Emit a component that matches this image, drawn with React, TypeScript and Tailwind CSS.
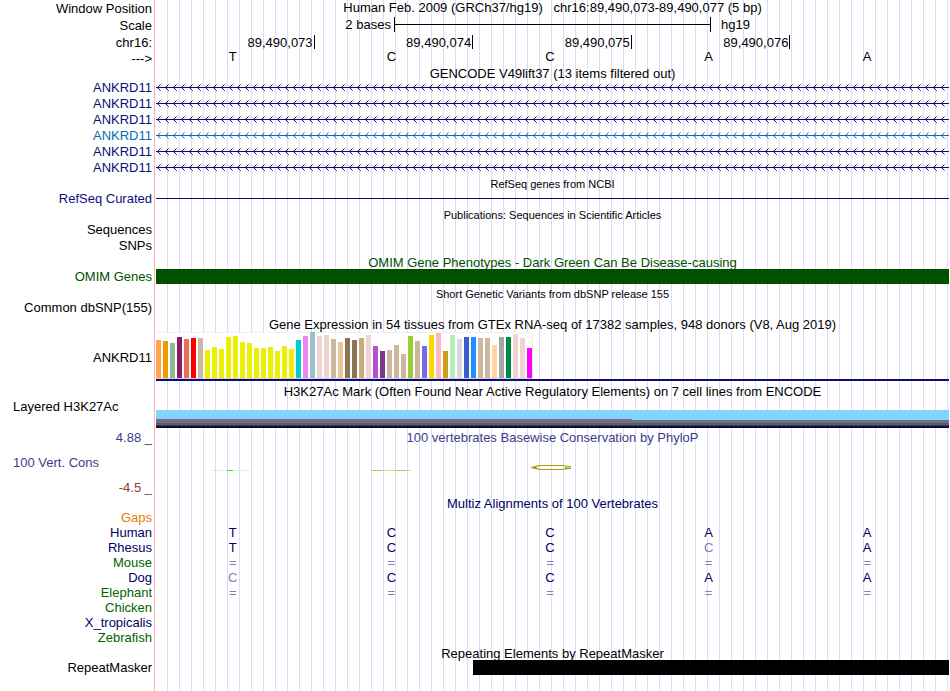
import React from 'react';
import { clsx } from 'clsx';

const genes = [
  { name: 'ANKRD11', alt: false },
  { name: 'ANKRD11', alt: false },
  { name: 'ANKRD11', alt: false },
  { name: 'ANKRD11', alt: true },
  { name: 'ANKRD11', alt: false },
  { name: 'ANKRD11', alt: false }
];

const positions = ['89,490,073', '89,490,074', '89,490,075', '89,490,076'];

// [height, colour] for each tissue
const tissues: [number, string][] = [
  [38, '#ffa54f'], [37, '#ee9a00'], [35, '#8fbc8f'], [41, '#8b1c62'], [39, '#ee6a50'], [40, '#ff0000'],
  [40, '#cdb79e'], [28, '#eeee00'], [31, '#eeee00'], [29, '#eeee00'], [41, '#eeee00'], [42, '#eeee00'],
  [36, '#eeee00'], [35, '#eeee00'], [30, '#eeee00'], [30, '#eeee00'], [31, '#eeee00'], [27, '#eeee00'],
  [32, '#eeee00'], [29, '#eeee00'], [38, '#00cdcd'], [42, '#ee82ee'], [46, '#9ac0cd'], [42, '#eed5d2'],
  [43, '#eed5d2'], [39, '#cdb79e'], [36, '#eec591'], [40, '#8b7355'], [38, '#8b7355'], [40, '#cdaa7d'],
  [43, '#eed5d2'], [32, '#b452cd'], [27, '#7a378b'], [28, '#cdb79e'], [33, '#cdb79e'], [24, '#cdb79e'],
  [42, '#9acd32'], [37, '#cdb79e'], [32, '#7a67ee'], [43, '#ffd700'], [45, '#ffb6c1'], [27, '#cd9b1d'],
  [43, '#b4eeb4'], [39, '#d9d9d9'], [41, '#3a5fcd'], [41, '#1e90ff'], [40, '#cdb79e'], [40, '#cdb79e'],
  [33, '#ffd39b'], [41, '#a6a6a6'], [41, '#008b45'], [44, '#eed5d2'], [40, '#eed5d2'], [30, '#ff00ff']
];

// lower case letters are mismatches and are drawn paler
const species = [
  { name: 'Gaps', color: 'text-[#e08000]', bases: '' },
  { name: 'Human', color: 'text-[#000064]', bases: 'TCCAA' },
  { name: 'Rhesus', color: 'text-[#000064]', bases: 'TCCcA' },
  { name: 'Mouse', color: 'text-[#006400]', bases: '=====' },
  { name: 'Dog', color: 'text-[#000064]', bases: 'cCCAA' },
  { name: 'Elephant', color: 'text-[#006400]', bases: '=====' },
  { name: 'Chicken', color: 'text-[#006400]', bases: '' },
  { name: 'X_tropicalis', color: 'text-[#000064]', bases: '' },
  { name: 'Zebrafish', color: 'text-[#006400]', bases: '' }
];

interface RowProps {
  label?: React.ReactNode;
  labelClass?: string;
  className?: string;
  children?: React.ReactNode;
}

const Row = ({ label, labelClass = 'text-right', className, children }: RowProps) => (
  <div className={clsx('flex', className)}>
    <div className={clsx('w-[154px] shrink-0 pr-0.5 whitespace-nowrap', labelClass)}>{label}</div>
    <div className="flex min-w-0 flex-1 border-l border-[#ffb4b4] px-px">
      <div className="min-w-0 flex-1 bg-[repeating-linear-gradient(to_right,transparent_0px,transparent_11px,#dcdcfa_11px,#dcdcfa_12px)]">
        {children}
      </div>
    </div>
  </div>
);

const Title = ({ children, className, small }: { children: React.ReactNode; className?: string; small?: boolean }) => (
  <h2 className={clsx('text-center whitespace-pre', small && 'pt-px text-[11px]', className)}>{children}</h2>
);

const Bases = ({ bases, className }: { bases: string; className?: string }) => (
  <div className={clsx('grid grid-cols-5', className)}>
    {bases.split('').map((base, i) => (
      <span key={i} className={clsx('pr-[5px] text-center', (base === '=' || base === 'c') && 'text-[#8080b4]')}>
        {base.toUpperCase()}
      </span>
    ))}
  </div>
);

const GeneLine = ({ id, color }: { id: string; color: string }) => (
  <svg className={clsx('block h-4 w-full', color)} shapeRendering="crispEdges" aria-hidden="true">
    <defs>
      <pattern id={id} width="8" height="16" patternUnits="userSpaceOnUse">
        <path d="M0 7h8v1H0zM2 6h1v1H2zM2 8h1v1H2zM3 5h1v1H3zM3 9h1v1H3z" fill="currentColor" />
        <path d="M4 4h1v1H4zM4 10h1v1H4z" fill="currentColor" opacity="0.5" />
      </pattern>
    </defs>
    <rect width="100%" height="16" fill={`url(#${id})`} />
  </svg>
);

const App = () => {
  return (
    <main className="flex min-h-screen flex-col overflow-hidden bg-white font-['Liberation_Sans',Arial,sans-serif] text-[13px] leading-[15px] text-black">
      {/* Ruler */}
      <Row label="Window Position" className="h-[17px]" labelClass="pt-px text-right">
        <Title>Human Feb. 2009 (GRCh37/hg19)   chr16:89,490,073-89,490,077 (5 bp)</Title>
      </Row>
      <Row label="Scale" className="h-[17px]" labelClass="pt-px text-right">
        <div className="grid grid-cols-[3fr_4fr_3fr]">
          <span className="pr-[3px] text-right">2 bases</span>
          <div className="flex h-[15px] items-center border-x border-black">
            <div className="h-px w-full bg-black" />
          </div>
          <span className="pl-2.5">hg19</span>
        </div>
      </Row>
      <Row label="chr16:" className="h-[15px]" labelClass="pt-px text-right">
        <div className="grid grid-cols-5 pt-px">
          {positions.map((position) => (
            <span key={position} className="h-3.5 border-r border-black pr-px text-right">{position}</span>
          ))}
        </div>
      </Row>
      <Row label="--->" className="h-[17px]" labelClass="pt-0.5 text-right">
        <Bases bases="TCCAA" />
      </Row>

      {/* GENCODE */}
      <Row className="h-3.5">
        <Title>GENCODE V49lift37 (13 items filtered out)</Title>
      </Row>
      {genes.map((gene, i) => (
        <Row
          key={i}
          label={gene.name}
          labelClass={clsx('text-right', gene.alt ? 'text-[#006eaf]' : 'text-[#0c0c78]')}
          className="h-4"
        >
          <GeneLine id={`arrows-${i}`} color={gene.alt ? 'text-[#006eaf]' : 'text-[#0c0c78]'} />
        </Row>
      ))}

      {/* RefSeq */}
      <Row className="h-[15px]">
        <Title small>RefSeq genes from NCBI</Title>
      </Row>
      <Row label="RefSeq Curated" labelClass="text-right text-[#0c0c78]" className="h-4">
        <div className="flex h-[15px] items-center">
          <div className="h-px w-full bg-[#0c0c78]" />
        </div>
      </Row>

      {/* Publications */}
      <Row className="h-[15px]">
        <Title small>Publications: Sequences in Scientific Articles</Title>
      </Row>
      <Row label="Sequences" className="h-4" />
      <Row label="SNPs" className="h-[17px]" />

      {/* OMIM */}
      <Row className="h-3.5">
        <Title className="text-[#005000]">OMIM Gene Phenotypes - Dark Green Can Be Disease-causing</Title>
      </Row>
      <Row label="OMIM Genes" labelClass="text-right text-[#005000]" className="h-[17px]">
        <div className="h-[15px] bg-[#005000]" />
      </Row>

      {/* dbSNP */}
      <Row className="h-3.5">
        <Title small>Short Genetic Variants from dbSNP release 155</Title>
      </Row>
      <Row label="Common dbSNP(155)" className="h-[17px]" />

      {/* GTEx */}
      <Row className="h-[15px]">
        <Title>Gene Expression in 54 tissues from GTEx RNA-seq of 17382 samples, 948 donors (V8, Aug 2019)</Title>
      </Row>
      <Row label="ANKRD11" className="h-[52px]" labelClass="pt-[18px] text-right">
        <div className="flex border-b-2 border-[#0c0c78]">
          <div className="flex h-[47px] items-end gap-0.5 border-t border-r border-b border-t-[#f0f0f0] border-r-[#f0f0f0] border-b-[#d2d2d2] bg-white">
            {tissues.map(([height, color], i) => (
              <div key={i} className="w-[5px] shrink-0" style={{ height, backgroundColor: color }} />
            ))}
          </div>
        </div>
      </Row>

      {/* H3K27Ac */}
      <Row className="h-[15px]">
        <Title>H3K27Ac Mark (Often Found Near Active Regulatory Elements) on 7 cell lines from ENCODE</Title>
      </Row>
      <Row label="Layered H3K27Ac" labelClass="pl-[13px] text-left" className="h-[31px]">
        <div className="pt-[11px]">
          <div className="h-[9px] bg-[#80d4ff]" />
          <div className="h-px bg-[#80d4ff]">
            <div className="h-px w-3/5 bg-[#806a80]" />
          </div>
          <div className="h-[3px] bg-[#806a80]" />
          <div className="h-0.5 bg-[#406a6a]" />
          <div className="h-px bg-[#403560]" />
          <div className="h-0.5 bg-[#150a30]" />
        </div>
      </Row>

      {/* PhyloP */}
      <Row
        className="h-[66px]"
        labelClass="flex flex-col gap-2.5 text-right text-[#3c3c8c]"
        label={
          <>
            <span>4.88 _</span>
            <span className="pl-[13px] text-left">100 Vert. Cons</span>
            <span className="text-[#8c3c3c]">-4.5 _</span>
          </>
        }
      >
        <Title className="text-[#3c3c8c]">100 vertebrates Basewise Conservation by PhyloP</Title>
        <svg className="mt-4 block h-4 w-full" viewBox="0 0 793 16" preserveAspectRatio="xMinYMid meet" aria-hidden="true">
          <path d="M55 9.5H94" stroke="#00ff00" strokeOpacity="0.2" />
          <path d="M71 9.5H77" stroke="#00ff00" />
          <path d="M216 9.5H255" stroke="#a0a000" strokeOpacity="0.4" />
          <path d="M217 9.5H226M241 9.5H250" stroke="#a0a000" strokeOpacity="0.5" />
          <path d="M375 6.5L384 4.5H406L415 5.5M375 6.5L384 8.5H406L415 7" fill="none" stroke="#a0a000" strokeWidth="1.2" />
          <path d="M375 6.5L383 4.5L380 6.5L383 8.5ZM409 6L416 7L409 8Z" fill="#a0a000" />
        </svg>
      </Row>

      {/* Multiz */}
      <Row className="h-3.5">
        <Title className="text-[#000064]">Multiz Alignments of 100 Vertebrates</Title>
      </Row>
      {species.map(({ name, color, bases }) => (
        <Row key={name} label={name} labelClass={clsx('text-right', color)} className="h-[15px]">
          <Bases bases={bases} className="text-[#000064]" />
        </Row>
      ))}

      {/* RepeatMasker */}
      <Row className="h-[15px]">
        <Title className="pt-px">Repeating Elements by RepeatMasker</Title>
      </Row>
      <Row label="RepeatMasker" className="flex-1">
        <div className="ml-[40%] h-[15px] bg-black" />
      </Row>
    </main>
  );
};

export default App;
